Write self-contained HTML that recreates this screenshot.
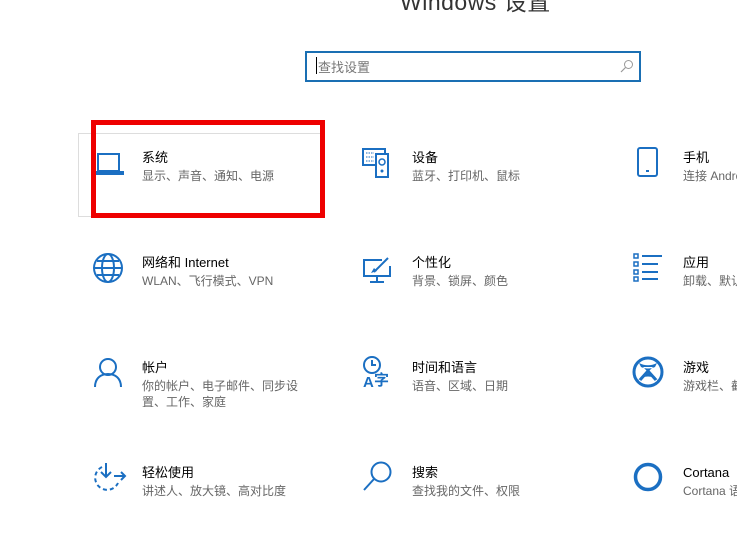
<!DOCTYPE html>
<html><head><meta charset="utf-8"><style>
body{margin:0;width:737px;height:552px;background:#fff;position:relative;overflow:hidden;font-family:"Liberation Sans","Noto Sans CJK SC",sans-serif}
.a{position:absolute}
.t{position:absolute;font-size:13px;color:#000;white-space:nowrap;line-height:16px}
.s{position:absolute;font-size:12px;color:#666;white-space:nowrap;line-height:17px}
svg{position:absolute;overflow:visible}
</style></head><body>
<div class="a" style="left:400px;top:-17px;font-size:23px;color:#333;letter-spacing:0.5px">Windows 设置</div>
<div class="a" style="left:305px;top:51px;width:332px;height:27px;border:2px solid #1a6fb3;"></div>
<div class="a" style="left:316px;top:57px;width:1px;height:17px;background:#000"></div>
<div class="a" style="left:318px;top:57px;font-size:13px;color:#777">查找设置</div>
<svg style="left:620px;top:59px" width="14" height="14"><circle cx="8.5" cy="5.5" r="4" fill="none" stroke="#999" stroke-width="1"/><path d="M5.5 8.5 L1 13" stroke="#999" stroke-width="1.2"/></svg>

<div class="a" style="left:78px;top:133px;width:245px;height:82px;border:1px solid #ddd;border-right:none"></div>

<!-- row1 -->
<svg style="left:96px;top:153px" width="30" height="24"><path d="M2 1H23V18H2Z M0 19H27V21H0Z" fill="none" stroke="#1b6fc2" stroke-width="2"/></svg>
<div class="a" style="left:91px;top:120px;width:224px;height:88px;border:5px solid #ee0000"></div>
<div class="t" style="left:142px;top:150px">系统</div>
<div class="s" style="left:142px;top:168px">显示、声音、通知、电源</div>

<svg style="left:362px;top:148px" width="30" height="30"><rect x="1" y="1" width="22" height="16" fill="none" stroke="#1b6fc2" stroke-width="2"/><rect x="14" y="6" width="12" height="23" fill="#fff" stroke="#1b6fc2" stroke-width="2"/><circle cx="20" cy="14" r="3" fill="none" stroke="#1b6fc2" stroke-width="1.5"/><circle cx="20" cy="23" r="1.5" fill="#1b6fc2"/><path d="M4 5h8M4 9h8M4 13h8" stroke="#1b6fc2" stroke-dasharray="1.5 1"/></svg>
<div class="t" style="left:412px;top:150px">设备</div>
<div class="s" style="left:412px;top:168px">蓝牙、打印机、鼠标</div>

<svg style="left:637px;top:147px" width="22" height="32"><rect x="1" y="1" width="19" height="28" rx="2" fill="none" stroke="#1b6fc2" stroke-width="2"/><rect x="9" y="23" width="3" height="2" fill="#1b6fc2"/></svg>
<div class="t" style="left:683px;top:150px">手机</div>
<div class="s" style="left:683px;top:168px">连接 Android</div>

<!-- row2 -->
<svg style="left:93px;top:253px" width="32" height="32"><g fill="none" stroke="#1b6fc2" stroke-width="2"><circle cx="15" cy="15" r="14"/><ellipse cx="15" cy="15" rx="6" ry="14"/><path d="M1 15H29M4 8H26M4 22H26"/></g></svg>
<div class="t" style="left:142px;top:255px">网络和 Internet</div>
<div class="s" style="left:142px;top:273px">WLAN、飞行模式、VPN</div>

<svg style="left:362px;top:256px" width="32" height="30"><g fill="none" stroke="#1b6fc2" stroke-width="2"><path d="M20 4H2V20H28V10"/><path d="M15 20V26M8 26H22"/><path d="M12 16L26 2"/></g><path d="M9 17 L12 12 L15 15Z" fill="#1b6fc2"/></svg>
<div class="t" style="left:412px;top:255px">个性化</div>
<div class="s" style="left:412px;top:273px">背景、锁屏、颜色</div>

<svg style="left:633px;top:253px" width="32" height="30"><g fill="none" stroke="#1b6fc2" stroke-width="1.5"><rect x="1" y="1" width="4" height="4"/><rect x="1" y="9" width="4" height="4"/><rect x="1" y="17" width="4" height="4"/><rect x="1" y="24" width="4" height="4"/></g><path d="M9 3H29M9 11H25M9 19H25M9 26H25" stroke="#1b6fc2" stroke-width="2"/></svg>
<div class="t" style="left:683px;top:255px">应用</div>
<div class="s" style="left:683px;top:273px">卸载、默认应用</div>

<!-- row3 -->
<svg style="left:94px;top:358px" width="30" height="30"><g fill="none" stroke="#1b6fc2" stroke-width="2"><circle cx="14" cy="9" r="8"/><path d="M1 29C1 20 7 16 14 16C21 16 27 20 27 29"/></g></svg>
<div class="t" style="left:142px;top:360px">帐户</div>
<div class="s" style="left:142px;top:378px">你的帐户、电子邮件、同步设</div>
<div class="s" style="left:142px;top:394px">置、工作、家庭</div>

<svg style="left:362px;top:356px" width="34" height="34"><circle cx="10" cy="9" r="8" fill="none" stroke="#1b6fc2" stroke-width="2"/><path d="M10 4V9H14" fill="none" stroke="#1b6fc2" stroke-width="2"/><text x="1" y="31" font-size="15" font-weight="bold" fill="#1b6fc2" font-family="Liberation Sans,sans-serif">A</text><text x="12" y="29" font-size="15" font-weight="bold" fill="#1b6fc2" font-family="Noto Sans CJK SC,sans-serif">字</text></svg>
<div class="t" style="left:412px;top:360px">时间和语言</div>
<div class="s" style="left:412px;top:378px">语音、区域、日期</div>

<svg style="left:633px;top:357px" width="32" height="32"><circle cx="15" cy="15" r="14" fill="none" stroke="#1b6fc2" stroke-width="3"/><path d="M6 6C12 9 18 9 24 6L22 10C18 12 12 12 8 10Z M5 24C10 14 20 14 25 24C20 18 10 18 5 24Z M10 10L15 15L20 10" fill="#1b6fc2"/><path d="M7 23L15 14L23 23" stroke="#1b6fc2" stroke-width="3" fill="none"/></svg>
<div class="t" style="left:683px;top:360px">游戏</div>
<div class="s" style="left:683px;top:378px">游戏栏、截屏</div>

<!-- row4 -->
<svg style="left:92px;top:462px" width="34" height="32"><g fill="none" stroke="#1b6fc2" stroke-width="2"><path d="M10 5A12 12 0 1 0 26 21" stroke-dasharray="4 3"/><path d="M14 1V14M9 10L14 15L19 10"/><path d="M22 14H33M29 10L33 14L29 18"/></g></svg>
<div class="t" style="left:142px;top:465px">轻松使用</div>
<div class="s" style="left:142px;top:483px">讲述人、放大镜、高对比度</div>

<svg style="left:362px;top:461px" width="32" height="32"><circle cx="19" cy="11" r="9.5" fill="none" stroke="#1b6fc2" stroke-width="2"/><path d="M12 18L2 29" stroke="#1b6fc2" stroke-width="2"/></svg>
<div class="t" style="left:412px;top:465px">搜索</div>
<div class="s" style="left:412px;top:483px">查找我的文件、权限</div>

<svg style="left:634px;top:463px" width="30" height="30"><circle cx="14" cy="14" r="12.5" fill="none" stroke="#1b6fc2" stroke-width="3.5"/></svg>
<div class="t" style="left:683px;top:465px">Cortana</div>
<div class="s" style="left:683px;top:483px">Cortana 语言</div>
</body></html>
